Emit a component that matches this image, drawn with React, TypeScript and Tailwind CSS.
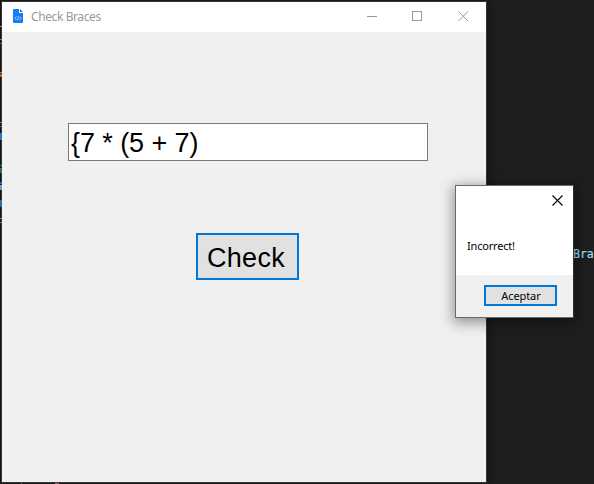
import React from "react";

const editorMarks = [
  "top-[26px] h-px bg-[#8b9298]",
  "top-[39px] h-px bg-[#3d8fd0]",
  "top-[43px] h-px bg-[#456f70]",
  "top-[72px] h-px bg-[#a98563]",
  "top-[74px] h-[3px] bg-[#b9682b]",
  "top-[122px] h-px bg-[#85858c]",
  "top-[126px] h-px bg-[#55555c]",
  "top-[133px] h-[7px] bg-[#2877b8]",
  "top-[165px] h-px bg-[#347b70]",
  "top-[168px] h-[5px] bg-[#266f68]",
  "top-[182px] h-[2px] bg-[#2f69a8]",
  "top-[185px] h-[5px] bg-[#7799cf]",
  "top-[200px] h-[7px] bg-[#286eae]",
  "top-[218px] h-px bg-[#a06da2]",
  "top-[222px] h-px bg-[#aa665d]",
];

function TitleBar() {
  return (
    <header className="flex h-[30px] shrink-0 items-center bg-white text-[#999999]">
      <svg className="mb-[2px] ml-[11px] h-[14px] w-[10px]" viewBox="0 0 10 14">
        <path d="M1 0h5v4h4v9a1 1 0 0 1-1 1H1a1 1 0 0 1-1-1V1a1 1 0 0 1 1-1Z" fill="#167df5" />
        <path d="M7 0l3 3H7Z" fill="#167df5" />
        <path d="M3.5 7.5L1.8 9.2l1.7 1.8M6.5 7.5l1.7 1.7L6.5 11M5.5 7.2l-1 4" fill="none" stroke="#c4e0ff" strokeWidth=".8" />
      </svg>
      <span className="ml-2 whitespace-nowrap text-[12px] leading-4 tracking-[-0.4px]">Check Braces</span>
      <svg className="ml-auto mr-[17px] h-3 w-[102px]" viewBox="0 0 102 12" fill="none" stroke="currentColor" shapeRendering="crispEdges">
        <path d="M0 5.5h10" />
        <rect x="45.5" y=".5" width="9" height="9" />
        <path d="M91.5.5l9.5 9.5M101 .5L91.5 10" shapeRendering="auto" />
      </svg>
    </header>
  );
}

function ResultDialog() {
  return (
    <section className="absolute left-[455px] top-[185px] flex h-[133px] w-[119px] flex-col border border-[#696969] border-r-[#303030] bg-white shadow-[0_3px_12px_2px_rgba(0,0,0,0.38)]">
      <div className="flex h-[89px] flex-col">
        <button className="mr-[10px] mt-[9px] self-end" aria-label="Cerrar">
          <svg className="h-[11px] w-[11px]" viewBox="0 0 11 11" stroke="black" strokeWidth="1.1">
            <path d="M.5.5l10 10M10.5.5l-10 10" />
          </svg>
        </button>
        <p className="ml-[11px] mt-[33px] whitespace-nowrap text-[11px] leading-[14px] tracking-[-0.2px] text-black">Incorrect!</p>
      </div>
      <footer className="flex flex-1 items-start justify-end bg-[#f0f0f0] pr-4 pt-[10px]">
        <button className="flex h-[21px] w-[73px] items-center justify-center border-2 border-[#0078d7] bg-[#e1e1e1] pl-px text-[11px] leading-[14px] tracking-[-0.1px] text-black">Aceptar</button>
      </footer>
    </section>
  );
}

export default function App() {
  return (
    <div className="relative h-[484px] w-[594px] overflow-hidden bg-[#1e1e1e] pl-px pt-px font-['Noto_Sans',sans-serif]">
      <div className="absolute left-0 top-0 h-full w-px bg-[#151515]" />
      {editorMarks.map((mark) => (
        <span key={mark} className={`absolute left-0 w-[2px] ${mark}`} />
      ))}
      <span className="absolute left-[573px] top-[247px] font-['DejaVu_Sans_Mono',monospace] text-[11.5px] leading-[14px] text-[#9cdcfe] [-webkit-text-stroke:0.2px_#9cdcfe]">Bra</span>
      <main className="flex h-[482px] w-[486px] flex-col border border-[#353538] bg-[#f0f0f0] shadow-[2px_0_8px_rgba(0,0,0,0.4)]">
        <TitleBar />
        <div className="flex flex-1 flex-col font-['Liberation_Sans',sans-serif] text-[27px] leading-[32px] text-black">
          <input aria-label="Expression" readOnly value="{7 * (5 + 7)" className="ml-[66px] mt-[91px] h-[38px] w-[360px] border border-[#7a7a7a] bg-white px-[2px] pb-0 pt-[2px] tracking-[-0.08px] outline-none" />
          <button className="ml-[194px] mt-[72px] flex h-[47px] w-[103px] items-center justify-center border-2 border-[#0078d7] bg-[#e1e1e1] pr-[3px] pt-[3px] tracking-[0.3px]">Check</button>
        </div>
      </main>
      <span className="absolute left-[21px] top-[483px] h-px w-px bg-[#666666]" />
      <span className="absolute left-[55px] top-[483px] h-px w-[2px] bg-[#8875b3]" />
      <span className="absolute left-[57px] top-[483px] h-px w-[2px] bg-[#af6657]" />
      <ResultDialog />
    </div>
  );
}
